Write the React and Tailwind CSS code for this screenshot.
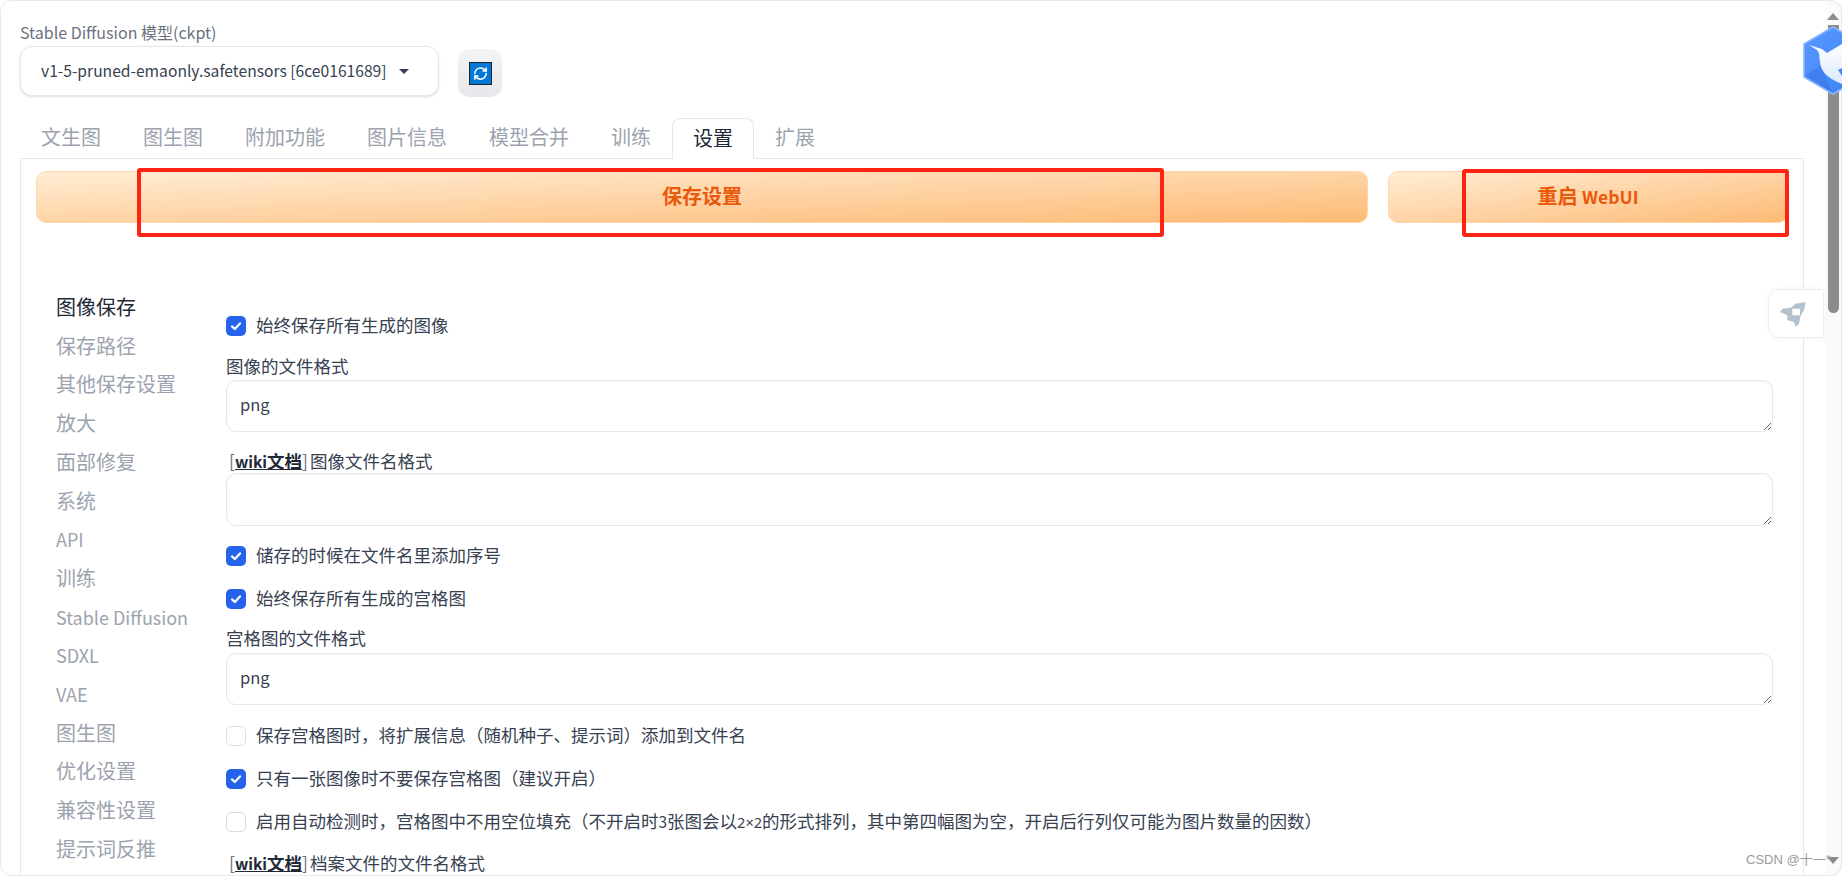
import React from "react";
import { RefreshCw } from "lucide-react";

function Check({ on, text, className = "" }) {
  return (
    <label className={`flex items-center h-5 ${className}`}>
      <span className={`w-5 h-5 shrink-0 rounded-[5px] flex items-center justify-center ${on ? "bg-[#2563eb]" : "bg-white border border-[#d9dce2]"}`}>
        {on && (
          <svg width="14" height="14" viewBox="0 0 14 14" fill="none">
            <path d="M3 7.4 5.8 10 11 4.4" stroke="#fff" strokeWidth="2.2" strokeLinecap="round" strokeLinejoin="round" />
          </svg>
        )}
      </span>
      <span className="ml-[10px] -mt-[2px] text-[17.5px] leading-6 text-[#374151] whitespace-nowrap">{text}</span>
    </label>
  );
}

function Field({ label, value = "", boxClass = "", labelClass = "" }) {
  return (
    <div className="flex flex-col">
      <div className={`text-[17.5px] leading-6 text-[#374151] whitespace-nowrap ${labelClass}`}>{label}</div>
      <textarea
        readOnly
        defaultValue={value}
        className={`w-full h-[52px] resize-y rounded-[10px] border border-[#e5e7eb] bg-white shadow-[inset_0_1px_2px_rgba(0,0,0,0.05)] px-[13px] py-[11px] text-[16.5px] leading-6 text-[#374151] outline-none ${boxClass}`}
      />
    </div>
  );
}

function Wiki({ text }) {
  return (
    <span className="ml-[3px]">
      <span className="text-[#6b7280]">[</span>
      <span className="font-bold underline text-[#1f2937]"><span className="text-[15.5px]">wiki</span>文档</span>
      <span className="text-[#6b7280]">]</span><span className="ml-[2px]">{text}</span>
    </span>
  );
}

const tabs = ["文生图", "图生图", "附加功能", "图片信息", "模型合并", "训练"];
const side = ["保存路径", "其他保存设置", "放大", "面部修复", "系统", "API", "训练", "Stable Diffusion", "SDXL", "VAE", "图生图", "优化设置", "兼容性设置", "提示词反推"];
const latin = new Set(["API", "Stable Diffusion", "SDXL", "VAE"]);

export default function App() {
  return (
    <div className="relative h-[876px] w-[1842px] overflow-hidden bg-white font-['Noto_Sans_CJK_SC','Noto_Sans',sans-serif]">
      <div className="h-[876px] rounded-xl border border-[#e8e9ec] bg-white pl-[19px] pr-[37px] overflow-hidden">
        <div className="pt-[19px] mb-px text-[16px] leading-6 text-[#6b7280] h-[44px] whitespace-nowrap">Stable Diffusion 模型(ckpt)</div>

        <div className="flex items-start h-[52px] gap-[19px]">
          <div className="w-[419px] h-[50px] rounded-[12px] border border-[#e5e7eb] bg-white shadow-sm flex items-center pl-[20px] text-[15.65px] text-[#374151] whitespace-nowrap">
            <span>v1-5-pruned-emaonly.safetensors [6ce0161689]</span>
            <span className="ml-[12px] w-0 h-0 border-x-[5px] border-x-transparent border-t-[5px] border-t-[#374151]" />
          </div>
          <button className="mt-[3px] w-[44px] h-[48px] rounded-xl bg-gradient-to-b from-[#f3f4f6] to-[#e5e7eb] flex items-center justify-center">
            <span className="w-[23px] h-[23px] bg-[#0078d7] border border-[#222] flex items-center justify-center">
              <RefreshCw size={15} color="#fff" strokeWidth={2.4} />
            </span>
          </button>
        </div>

        <div className="flex items-end h-[60px] whitespace-nowrap">
          {tabs.map((t) => (
            <div key={t} className="h-[40px] px-[21px] text-[20px] leading-[38px] text-[#9ca3af]">{t}</div>
          ))}
          <div className="relative z-10 -mb-px h-[41px] px-[20px] rounded-t-lg border border-b-0 border-[#e5e7eb] bg-white text-[20px] leading-[38px] text-[#1f2937]">设置</div>
          <div className="h-[40px] px-[21px] text-[20px] leading-[38px] text-[#9ca3af]">扩展</div>
        </div>

        <div className="h-[720px] border border-[#e5e7eb] bg-white pl-[15px] pr-[15px] pt-[12px]">
          <div className="flex gap-[20px]">
            <button className="flex-1 h-[52px] pb-[2px] rounded-[10px] border border-[#fed7aa] bg-gradient-to-br from-[#ffedd5] to-[#fdba74] text-[#ea580c] text-[20px] font-semibold">保存设置</button>
            <button className="w-[400px] h-[52px] pb-[2px] rounded-[10px] border border-[#fed7aa] bg-gradient-to-br from-[#ffedd5] to-[#fdba74] text-[#ea580c] text-[20px] font-semibold">重启 <span className="text-[17.5px]">WebUI</span></button>
          </div>

          <div className="flex mt-[65px]">
            <div className="w-[190px] shrink-0 pl-[20px] flex flex-col text-[20px] leading-[38.7px] text-[#9ca3af] whitespace-nowrap">
              <div className="text-[#1f2937]">图像保存</div>
              {side.map((s, i) => (
                <div key={i}>{latin.has(s) ? <span className="text-[18px]">{s}</span> : s}</div>
              ))}
            </div>
            <div className="w-[1547px] shrink-0 pt-[28px] flex flex-col">
              <Check on text="始终保存所有生成的图像" />
              <div className="mt-[18px]"><Field label="图像的文件格式" value="png" boxClass="mt-[2px]" /></div>
              <div className="mt-[17px]"><Field label={<Wiki text="图像文件名格式" />} boxClass="h-[53px]" /></div>
              <Check on text="储存的时候在文件名里添加序号" className="mt-[20px]" />
              <Check on text="始终保存所有生成的宫格图" className="mt-[23px]" />
              <div className="mt-[17px]"><Field label="宫格图的文件格式" value="png" boxClass="mt-[3px]" /></div>
              <Check text="保存宫格图时，将扩展信息（随机种子、提示词）添加到文件名" className="mt-[21px]" />
              <Check on text="只有一张图像时不要保存宫格图（建议开启）" className="mt-[23px]" />
              <Check
                text={
                  <>
                    启用自动检测时，宫格图中不用空位填充（不开启时<span className="text-[15.5px]">3</span>张图会以<span className="font-['Noto_Sans'] text-[14.5px]">2×2</span>的形式排列，其中第四幅图为空，开启后行列仅可能为图片数量的因数）
                  </>
                }
                className="mt-[23px]"
              />
              <div className="mt-[19px] text-[17.5px] leading-6 text-[#374151] whitespace-nowrap"><Wiki text="档案文件的文件名格式" /></div>
            </div>
          </div>
        </div>
      </div>

      {/* screenshot annotations */}
      <div className="absolute left-[137px] top-[168px] w-[1027px] h-[69px] border-[4px] border-[#ff2314] rounded-[3px]" />
      <div className="absolute left-[1462px] top-[169px] w-[327px] h-[68px] border-[4px] border-[#ff2314] rounded-[3px]" />

      {/* scrollbar */}
      <div className="absolute right-0 top-0 bottom-0 w-[17px] bg-[#fafafa] rounded-r-xl border-y border-r border-[#e8e9ec]" />
      <div className="absolute left-[1828px] top-[25px] w-[11px] h-[288px] rounded-b-md bg-[#8c8c8c]" />
      <div className="absolute left-[1827px] top-[13px] w-0 h-0 border-x-[6.5px] border-x-transparent border-b-[7px] border-b-[#8c8c8c]" />
      <div className="absolute left-[1827px] top-[857px] w-0 h-0 border-x-[6.5px] border-x-transparent border-t-[7px] border-t-[#8c8c8c]" />

      {/* floating logo */}
      <svg className="absolute left-[1800px] top-[25px]" width="42" height="71" viewBox="1800 25 42 71">
        <defs>
          <linearGradient id="hexg" x1="0" y1="0" x2="1" y2="1">
            <stop offset="0" stopColor="#5a9aff" />
            <stop offset="1" stopColor="#3b7ff5" />
          </linearGradient>
          <linearGradient id="birdg" x1="0" y1="0" x2="0" y2="1">
            <stop offset="0" stopColor="#ffffff" />
            <stop offset="1" stopColor="#dbe8ff" />
          </linearGradient>
        </defs>
        <path d="M1833 27 L1862 44 V77 L1833 94 L1804 77 V44 Z" fill="url(#hexg)" stroke="#8ab6ff" strokeWidth="1.6" strokeLinejoin="round" />
        <path d="M1805 76 L1820 66 L1833 93 Z" fill="#3573e6" opacity="0.55" />
        <path d="M1809 45 L1822 49 L1827 53 L1842 44 V68 L1838 70 L1842 76 V84 C1832 80 1821 74 1820 62 C1819 56 1820 53 1817 50 Z" fill="url(#birdg)" />
      </svg>

      {/* floating rocket */}
      <div className="absolute left-[1768px] top-[289px] w-[56px] h-[49px] rounded-l-xl border border-[#eceef1] bg-white shadow-[0_0_6px_rgba(0,0,0,0.04)] flex items-center pl-[11px] pt-[1px]">
        <svg width="26" height="25" viewBox="0 0 26 25">
          <path d="M25.7 0 L15.7 1.7 L10.7 5.7 L2.3 6.7 L0 10 L7.3 13.3 L7.3 18.3 L14 20 L15.7 25 L19 21.7 L20.7 13.3 L24 8.3 Z" fill="#b4c2cf" />
          <rect x="12.3" y="6.7" width="7.7" height="6.6" fill="#fff" />
        </svg>
      </div>

      {/* watermark */}
      <div className="absolute left-[1746px] top-[851px] text-[13px] leading-[18px] text-[#9a9a9a] font-['Liberation_Sans','Noto_Sans_CJK_SC',sans-serif] whitespace-nowrap">CSDN @十一*</div>
    </div>
  );
}
